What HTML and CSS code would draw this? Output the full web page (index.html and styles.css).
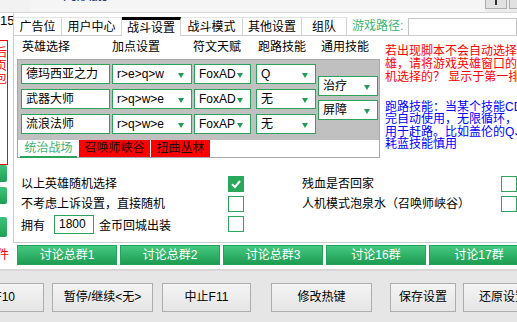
FILE: index.html
```html
<!DOCTYPE html>
<html>
<head>
<meta charset="utf-8">
<link rel="stylesheet" href="styles.css">
</head>
<body>
<div class="topbar">
  <div class="tb-left"></div>
  <div class="tb-mid"><span class="tb-text">FoxAuto</span></div>
  <div class="tb-btns"><span class="tb-btn"><span class="tb-glyph"></span></span><span class="tb-btn"></span></div>
</div>
<div class="main">
  <div class="leftcol">
    <div class="num">15</div>
    <div class="redbox">
      <div>最后</div>
      <div>首页</div>
      <div>礼包</div>
    </div>
    <div class="sidebtn sb1"></div>
    <div class="sidebtn sb2"></div>
    <div class="sidebtn sb3"></div>
  </div>
  <div class="tabpanel">
    <div class="tabbar">
      <div class="tab t1">广告位</div>
      <div class="tab t2">用户中心</div>
      <div class="tab t3 active">战斗设置</div>
      <div class="tab t4">战斗模式</div>
      <div class="tab t5">其他设置</div>
      <div class="tab t6">组队</div>
      <div class="pathlabel">游戏路径:</div>
      <div class="pathinput"></div>
    </div>
    <div class="content">
      <div class="topsec">
        <div class="cfg">
          <div class="headers">
            <span class="h h1">英雄选择</span>
            <span class="h h2">加点设置</span>
            <span class="h h3">符文天赋</span>
            <span class="h h4">跑路技能</span>
            <span class="h h5">通用技能</span>
          </div>
          <div class="box">
            <div class="gray">
              <div class="grid">
                <div class="field">德玛西亚之力</div>
                <div class="field dd">r&gt;e&gt;q&gt;w<i class="arr"></i></div>
                <div class="field dd rune">FoxAD<i class="arr"></i></div>
                <div class="field dd">Q<i class="arr"></i></div>
                <div class="field">武器大师</div>
                <div class="field dd">r&gt;q&gt;w&gt;e<i class="arr"></i></div>
                <div class="field dd rune">FoxAD<i class="arr"></i></div>
                <div class="field dd">无<i class="arr"></i></div>
                <div class="field">流浪法师</div>
                <div class="field dd">r&gt;q&gt;w&gt;e<i class="arr"></i></div>
                <div class="field dd rune">FoxAP<i class="arr"></i></div>
                <div class="field dd">无<i class="arr"></i></div>
              </div>
              <div class="col5">
                <div class="field dd">治疗<i class="arr"></i></div>
                <div class="field dd">屏障<i class="arr"></i></div>
              </div>
            </div>
            <div class="maps">
              <span class="map m1">统治战场</span>
              <span class="map m2">召唤师峡谷</span>
              <span class="map m3">扭曲丛林</span>
            </div>
          </div>
        </div>
        <div class="notes">
          <div class="red">
            <div>若出现脚本不会自动选择英</div>
            <div>雄，请将游戏英雄窗口的大小</div>
            <div>机选择的？ 显示于第一排英雄</div>
          </div>
          <div class="blue">
            <div>跑路技能：当某个技能CD好了</div>
            <div>完自动使用，无限循环，可以</div>
            <div>用于赶路。比如盖伦的Q、</div>
            <div>耗蓝技能慎用</div>
          </div>
        </div>
      </div>
      <div class="opts">
        <div class="lbl">以上英雄随机选择</div>
        <div class="cb on"><svg viewBox="0 0 16 16" width="16" height="16"><path d="M4 8.2 L7 11 L12 5" fill="none" stroke="#fff" stroke-width="2"/></svg></div>
        <div></div>
        <div class="lbl">残血是否回家</div>
        <div class="cb"></div>

        <div class="lbl">不考虑上诉设置，直接随机</div>
        <div class="cb"></div>
        <div></div>
        <div class="lbl">人机模式泡泉水（召唤师峡谷）</div>
        <div class="cb"></div>

        <div class="lbl gold"><span>拥有</span><span class="goldin">1800</span><span>金币回城出装</span></div>
        <div class="cb"></div>
        <div></div>
        <div></div>
        <div></div>
      </div>
    </div>
  </div>
</div>
<div class="links">
  <div class="clip"><span>软件</span></div>
  <div class="lbtn">讨论总群1</div>
  <div class="lbtn">讨论总群2</div>
  <div class="lbtn">讨论总群3</div>
  <div class="lbtn">讨论16群</div>
  <div class="lbtn">讨论17群</div>
</div>
<div class="bottombar">
  <div class="btn b1">开始F10</div>
  <div class="btn b2">暂停/继续&lt;无&gt;</div>
  <div class="btn b3">中止F11</div>
  <div class="btn b4">修改热键</div>
  <div class="btn b5">保存设置</div>
  <div class="btn b6">还原设置</div>
</div>
</body>
</html>
```

FILE: styles.css
```css
* { box-sizing: border-box; }
html, body { margin: 0; padding: 0; }
body {
  width: 517px;
  height: 322px;
  overflow: hidden;
  background: #fff;
  font-family: "Liberation Sans", "Noto Sans CJK SC", sans-serif;
  font-size: 12px;
  color: #000;
}

/* top chrome */
.topbar {
  height: 13px;
  display: flex;
  background: #ececec;
  border-bottom: 1px solid #d6d6d6;
  overflow: hidden;
}
.tb-left { width: 30px; background: #f2f2f2; }
.tb-mid { flex: 1; position: relative; overflow: hidden; background: #f5f5f5; }
.tb-text { position: absolute; left: 33px; top: -10px; color: #1c2a78; font-size: 12px; }
.tb-btns { display: flex; gap: 2px; align-items: flex-start; padding-right: 0; margin-right: -14px; }
.tb-btn { width: 22px; height: 9px; background: #e1e1e1; border: 1px solid #adadad; border-top: none; display: flex; justify-content: center; }
.tb-glyph { width: 2px; height: 5px; background: #333; }

/* main */
.main { display: flex; height: 230px; }
.leftcol {
  width: 13px;
  overflow: hidden;
  display: flex;
  flex-direction: column;
  align-items: flex-end;
}
.num {
  align-self: flex-start;
  font-size: 13px;
  line-height: 14px;
  margin-top: 1px;
  height: 14px;
}
.redbox {
  flex: none;
  width: 70px;
  height: 125px;
  margin-top: 12px;
  margin-right: 5px;
  border: 1px solid #ff0000;
  color: #ff0000;
  text-align: right;
  padding-top: 6px;
  line-height: 13px;
  font-size: 12px;
}
.sidebtn {
  flex: none;
  width: 60px;
  margin-right: 6px;
  background: linear-gradient(#3ec27a, #1f9f54);
  border-radius: 2px;
}
.sb1 { height: 17px; margin-top: 0; }
.sb2 { height: 17px; margin-top: 5px; }
.sb3 { height: 20px; margin-top: 13px; }

.tabpanel {
  flex: 1;
  min-width: 0;
  border-left: 1px solid #cdcdcd;
  border-bottom: 1px solid #cdcdcd;
  display: flex;
  flex-direction: column;
}
.tabbar {
  height: 23px;
  flex: none;
  display: flex;
  align-items: flex-end;
  border-bottom: 1px solid #cdcdcd;
}
.tab {
  height: 18px;
  border-right: 1px solid #d4d4d4;
  border-top: 1px solid #e4e4e4;
  display: flex;
  justify-content: center;
  align-items: center;
  line-height: 14px;
  padding-top: 1px;
}
.t1 { width: 48px; }
.t2 { width: 60px; }
.t3 { width: 59px; }
.t4 { width: 62px; }
.t5 { width: 59px; }
.t6 { width: 45px; }
.tab.active {
  border-top: 3px solid #000;
  height: 19px;
  margin-bottom: -1px;
  background: #fff;
  padding-top: 0;
}
.pathlabel { color: #3cb371; margin-left: 5px; width: 56px; height: 17px; line-height: 17px; }
.pathinput { flex: 1; height: 17px; border: 1px solid #c4c4c4; border-bottom: none; }

.content { flex: 1; display: flex; flex-direction: column; }
.topsec { display: flex; height: 122px; flex: none; }
.cfg { margin-left: 3px; width: 363px; flex: none; }
.headers { height: 23px; padding-top: 4px; display: flex; padding-left: 5px; line-height: 14px; }
.h { display: block; }
.h1 { width: 90px; }
.h2 { width: 81px; }
.h3 { width: 65px; }
.h4 { width: 63px; }

.box { border: 1px solid #a8a8a8; height: 99px; }
.gray {
  background: #c0c0c0;
  height: 80px;
  display: flex;
  padding: 4px 0 0 3px;
}
.grid {
  display: grid;
  grid-template-columns: 89px 80px 60px 60px;
  grid-auto-rows: 20px;
  column-gap: 2px;
  row-gap: 5px;
}
.field {
  background: #fff;
  border: 1px solid #2ba35a;
  height: 20px;
  padding-left: 4px;
  line-height: 18px;
  font-size: 12px;
  position: relative;
  white-space: nowrap;
}
.dd { padding-left: 4px; }
.rune { width: 57px; }
.arr {
  position: absolute;
  right: 7px;
  top: 8px;
  width: 0;
  height: 0;
  border-left: 3.5px solid transparent;
  border-right: 3.5px solid transparent;
  border-top: 5px solid #1d9e52;
}
.col5 {
  margin-left: 2px;
  width: 60px;
  padding-top: 12px;
  display: flex;
  flex-direction: column;
  gap: 4px;
}
.col5 .field { height: 20px; }

.maps { height: 17px; display: flex; padding-left: 2px; line-height: 16px; }
.map { display: block; text-align: center; height: 17px; }
.m1 { width: 57px; color: #3cb371; border-bottom: 2px solid #2ba35a; height: 18px; }
.m2 { width: 71px; background: #ff0000; margin-left: 2px; color: #111; }
.m3 { width: 59px; background: #ff0000; margin-left: 1px; color: #111; }

.notes { margin-left: 5px; flex: 1; min-width: 0; overflow: hidden; white-space: nowrap; }
.red { color: #ff0000; padding-top: 9px; line-height: 13px; }
.blue { color: #0000ff; margin-top: 17px; line-height: 12.3px; }

.opts {
  padding: 18px 0 0 7px;
  display: grid;
  grid-template-columns: 207px 16px 58px 199px 16px;
  grid-auto-rows: 20px;
}
.lbl { line-height: 14px; padding-top: 1px; white-space: nowrap; }
.cb {
  width: 16px;
  height: 16px;
  border: 1px solid #28a85a;
  background: #fff;
}
.cb.on { background: #28a85a; border-color: #28a85a; }
.cb.on svg { display: block; margin: -1px 0 0 -1px; }
.gold { display: flex; align-items: center; padding-top: 0; height: 20px; }
.goldin {
  display: block;
  width: 40px;
  height: 19px;
  border: 1px solid #2ba35a;
  margin: -3px 5px 0 9px;
  padding-left: 4px;
  line-height: 17px;
}

/* link row */
.links {
  height: 28px;
  display: flex;
  padding-top: 2px;
  border-bottom: 2px solid #d8d8d8;
}
.clip {
  width: 9px;
  overflow: hidden;
  display: flex;
  justify-content: flex-end;
  color: #ff0000;
  white-space: nowrap;
  padding-top: 3px;
  line-height: 14px;
  flex: none;
}
.lbtn {
  flex: none;
  width: 100px;
  height: 20px;
  margin-left: 3px;
  background: linear-gradient(#44c880, #1e9d52);
  border: 1px solid #23a358;
  color: #fff;
  text-align: center;
  line-height: 18px;
}
.clip + .lbtn { margin-left: 8px; }

/* bottom */
.bottombar {
  height: 52px;
  background: #e6e6e6;
  display: flex;
  padding-top: 12px;
}
.btn {
  flex: none;
  height: 29px;
  border: 1px solid #adadad;
  background: linear-gradient(#f4f4f4, #e5e5e5);
  text-align: center;
  line-height: 27px;
  white-space: nowrap;
  font-size: 12px;
}
.b1 { width: 84px; margin-left: -40px; text-align: right; padding-right: 28px; }
.b2 { width: 101px; margin-left: 8px; }
.b3 { width: 89px; margin-left: 9px; }
.b4 { width: 101px; margin-left: 20px; }
.b5 { width: 66px; margin-left: 18px; }
.b6 { width: 80px; margin-left: 7px; }
```
